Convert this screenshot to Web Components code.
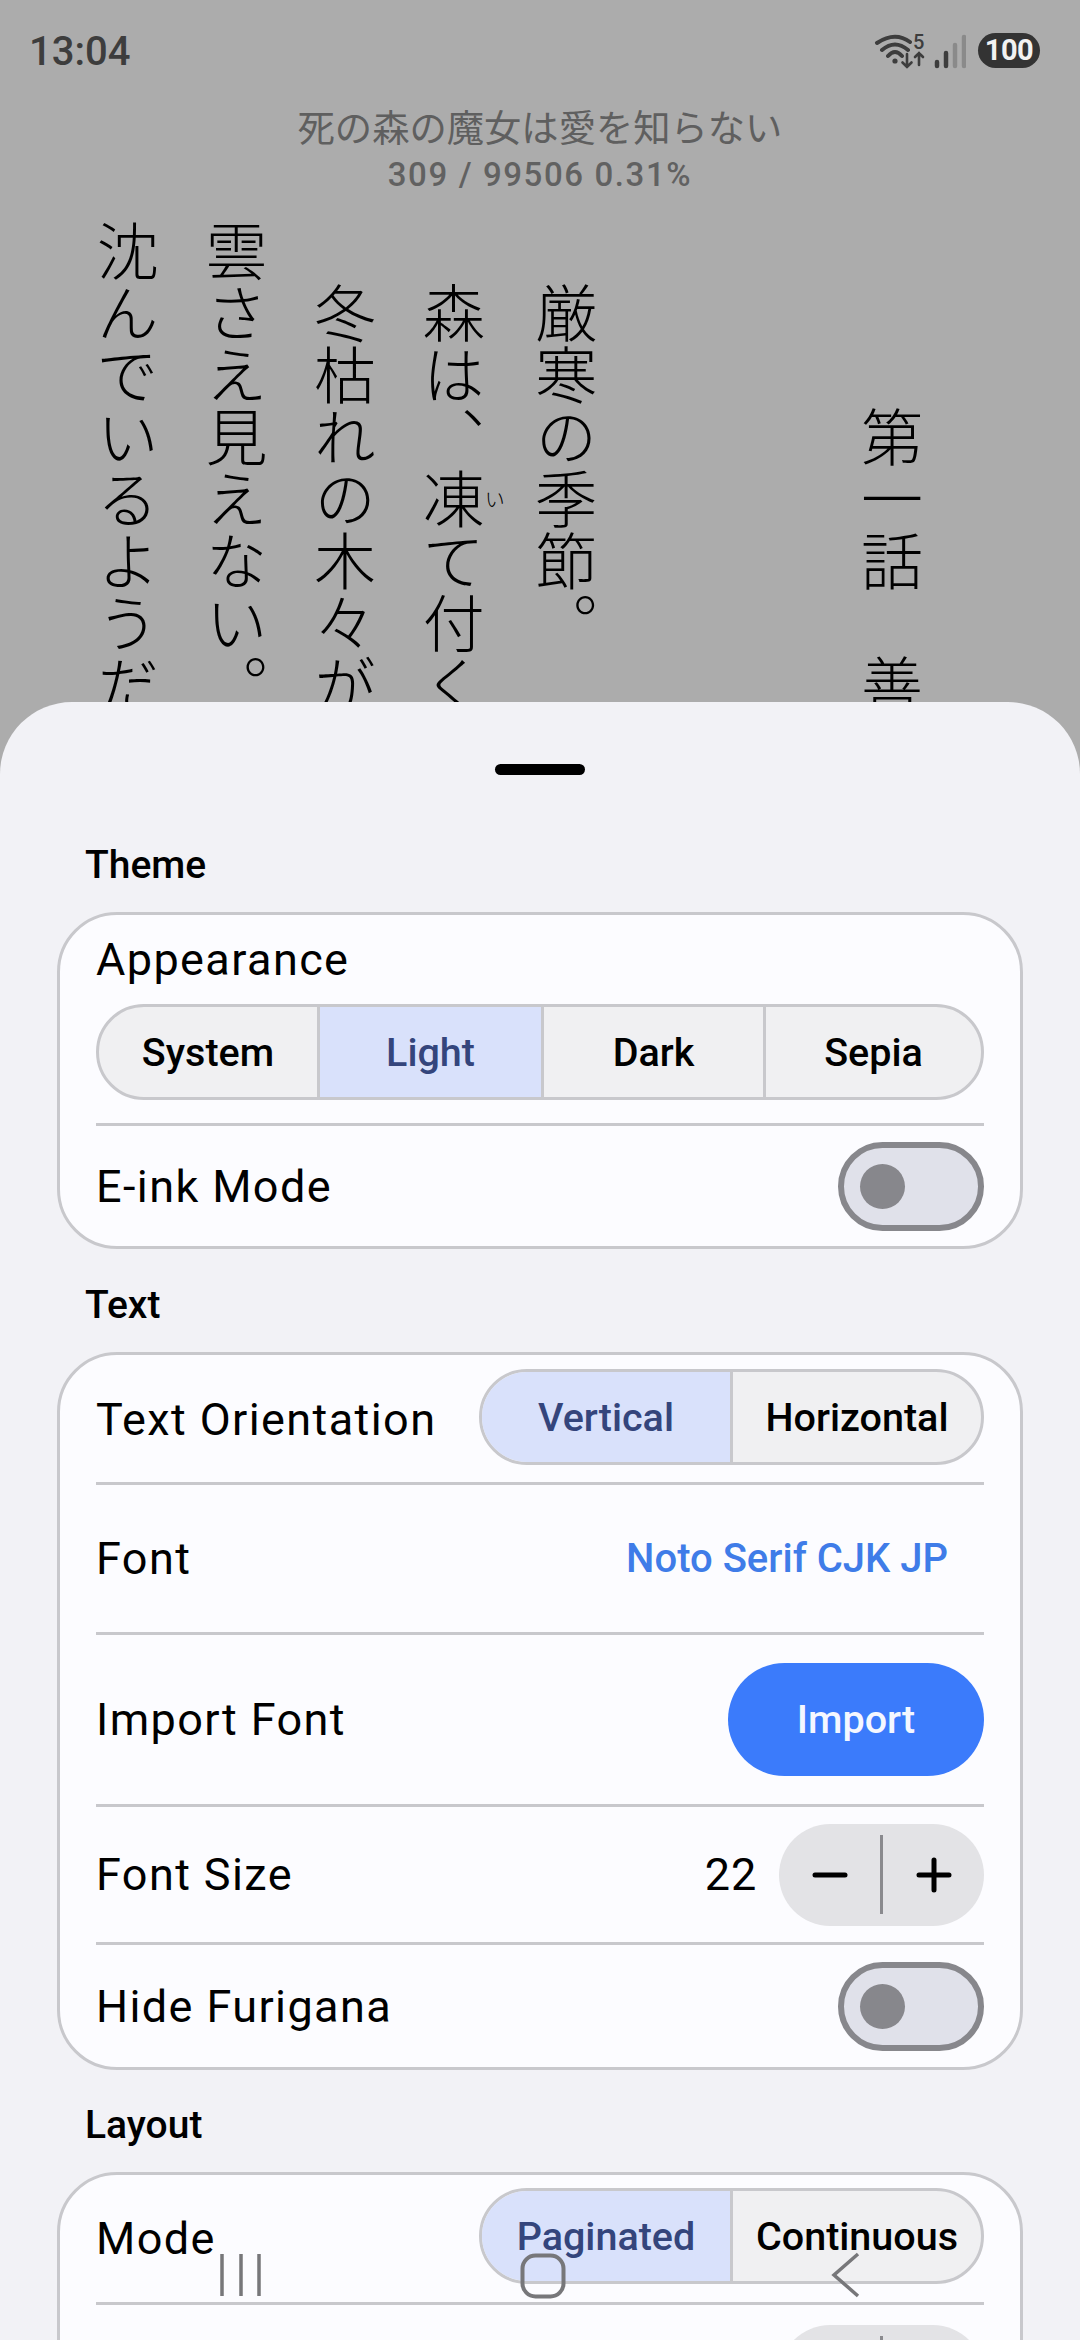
<!DOCTYPE html>
<html lang="ja"><head><meta charset="utf-8"><title>Reader settings</title>
<style>
html,body{margin:0;padding:0;width:1080px;height:2340px;overflow:hidden;background:#acacac}
body{font-family:Roboto,"Noto Sans CJK JP",sans-serif}
</style></head><body>
<reader-screen>
  <status-bar slot="top" time="13:04"></status-bar>
  <reader-page title-text="死の森の魔女は愛を知らない" progress="309 / 99506 0.31%"></reader-page>
  <settings-sheet slot="sheet">
    <section-label style="--h:137px">Theme</section-label>
    <settings-card>
      <stack-row label="Appearance">
        <seg-control><seg-item style="flex:0 0 218px">System</seg-item><seg-item style="flex:0 0 224px" selected>Light</seg-item><seg-item style="flex:0 0 222px">Dark</seg-item><seg-item>Sepia</seg-item></seg-control>
      </stack-row>
      <setting-row h="123" label="E-ink Mode" divider><toggle-switch></toggle-switch></setting-row>
    </settings-card>
    <section-label style="--h:103px">Text</section-label>
    <settings-card>
      <setting-row h="127" pad="14" label="Text Orientation"><seg-control style="width:505px"><seg-item selected>Vertical</seg-item><seg-item>Horizontal</seg-item></seg-control></setting-row>
      <setting-row h="150" label="Font" divider><span style="color:#3f7ce8;font-weight:500;font-size:40px;margin-right:36px">Noto Serif CJK JP</span></setting-row>
      <setting-row h="172" label="Import Font" divider><primary-button>Import</primary-button></setting-row>
      <setting-row h="138" label="Font Size" divider><stepper-control value="22"></stepper-control></setting-row>
      <setting-row h="125" label="Hide Furigana" divider><toggle-switch></toggle-switch></setting-row>
    </settings-card>
    <section-label style="--h:102px">Layout</section-label>
    <settings-card>
      <setting-row h="127" pad="13" label="Mode"><seg-control style="width:505px"><seg-item selected>Paginated</seg-item><seg-item>Continuous</seg-item></seg-control></setting-row>
      <setting-row h="144" label="" divider><stepper-control value=""></stepper-control></setting-row>
    </settings-card>
  </settings-sheet>
  <nav-bar slot="nav"></nav-bar>
</reader-screen>
<script>
function def(name,css,html,init){
  customElements.define(name,class extends HTMLElement{
    constructor(){super();this.attachShadow({mode:'open'})}
    connectedCallback(){
      const a=n=>this.getAttribute(n);
      this.shadowRoot.innerHTML='<style>'+css+'</style>'+(typeof html==='function'?html(a,this):html);
      if(init)init(this,a);
    }
  });
}
def('reader-screen',`:host{display:block;position:relative;width:1080px;height:2340px;overflow:hidden;background:#acacac}`,
 `<slot name="top"></slot><slot></slot><slot name="sheet"></slot><slot name="nav"></slot>`);
def('status-bar',`:host{display:flex;align-items:center;justify-content:space-between;height:100px;padding:0 40px 0 29px;color:#3d3d3d;font-family:Roboto,sans-serif}
 .t{font-size:40px;font-weight:500;letter-spacing:0;position:relative;top:1px}
 .r{display:flex;align-items:center;gap:12px}
 svg{display:block}
 .b{width:62px;height:35px;border-radius:18px;background:#333;color:#f2f2f2;font-size:29px;font-weight:700;display:flex;align-items:center;justify-content:center;letter-spacing:-.5px}`,
 a=>`<span class="t">${a('time')}</span><span class="r">
 <svg width="96" height="40" viewBox="870 30 96 40" fill="none" stroke="#3d3d3d" stroke-linecap="round">
  <path d="M877 43Q895 31 910 42M882 50Q895 39 908 50M888 56Q895 48 902 56" stroke-width="4"/>
  <circle cx="895" cy="61" r="2.6" fill="#3d3d3d" stroke="none"/>
  <path d="M907 54V67M902.500 62.500L907 67L911.500 62.500M919 65V53M915 57L919 53L923 57" stroke-width="2.600"/>
  <text x="913" y="49" font-family="Roboto,sans-serif" font-size="20" font-weight="500" fill="#3d3d3d" stroke="none">5</text>
  <g stroke-width="4.500"><path d="M937 62V66M946 53V66"/><path d="M955 45V66M964 37V66" stroke="#8a8a8a"/></g>
 </svg><span class="b">100</span></span>`);
def('reader-page',`:host{display:block;color:#000;font-family:"Noto Sans CJK JP",sans-serif}
 .h{color:#5f5f5f;text-align:center;height:120px}
 .a{font-size:37.300px;line-height:50px;padding-top:1px}
 .p{font-family:Roboto,sans-serif;font-size:33px;font-weight:500;line-height:47px;letter-spacing:1.600px;color:#616161}
 .v{writing-mode:vertical-rl;text-orientation:upright;font-size:62px;line-height:108.600px;font-weight:300;margin-left:73px;width:873px;height:600px;white-space:nowrap;font-family:"Noto Sans CJK JP",sans-serif;overflow:hidden}
 .v div{display:block;min-width:108.600px}
 .wide{margin-right:4px}
 rt{font-size:20px;line-height:20px}`,
 a=>`<div class="h"><div class="a">${a('title-text')}</div><div class="p">${a('progress')}</div></div>
 <div class="v"><div>　　　第一話　善</div><div></div><div></div><div>　厳寒の季節。</div><div class="wide">　森は、<ruby>凍<rt>い</rt></ruby>て付く</div><div>　冬枯れの木々が</div><div>雲さえ見えない。</div><div>沈んでいるようだ</div></div>`);
def('settings-sheet',`:host{display:block;position:absolute;left:0;right:0;top:702px;bottom:0;background:#f2f2f6;border-radius:72px 72px 0 0;overflow:hidden;padding:0 57px;box-sizing:border-box;font-family:Roboto,sans-serif}
 .g{width:90px;height:11px;border-radius:6px;background:#000;margin:62px auto 0}`,
 `<div class="g"></div><slot></slot>`);
def('section-label',`:host{display:flex;align-items:flex-end;height:var(--h,103px);padding-left:28px;box-sizing:border-box;font-size:39px;font-weight:500;color:#000}
 span{display:block;line-height:94px}`,`<span><slot></slot></span>`);
def('settings-card',`:host{display:block;box-sizing:border-box;border:3px solid #c8c8cc;border-radius:60px;background:#fcfcff;padding:0 36px}`,`<slot></slot>`);
const LBL=`font-size:45px;letter-spacing:1.400px;color:#000;`;
def('stack-row',`:host{display:block;height:208px;box-sizing:border-box}
 .l{${LBL}height:89px;display:flex;align-items:center;}`,a=>`<div class="l">${a('label')}</div><slot></slot>`);
def('setting-row',`:host{display:flex;align-items:center;justify-content:space-between;box-sizing:border-box;color:#000}
 .l{${LBL}}`,(a,el)=>{
   el.style.height=a('h')+'px';
   if(a('divider')!==null){el.style.borderTop='3px solid #c8c8cc';}
   if(a('pad')){el.style.alignItems='flex-start';el.style.paddingTop=a('pad')+'px';}
   return `<span class="l" style="${a('pad')?'align-self:center;margin-top:-13px':''}">${a('label')}</span><slot></slot>`;
 });
def('seg-control',`:host{display:flex;box-sizing:border-box;height:96px;border:3px solid #c8c8cc;border-radius:48px;overflow:hidden;background:#f0f0f2}`,`<slot></slot>`);
def('seg-item',`:host{flex:1 1 0;display:flex;align-items:center;justify-content:center;font-size:39.500px;font-weight:500;color:#000;box-sizing:border-box;white-space:nowrap}
 :host(:not(:first-child)){border-left:3px solid #c8c8cc}
 :host([selected]){background:#d9e1fb;color:#34457c}`,`<slot></slot>`);
def('toggle-switch',`:host{display:flex;align-items:center;box-sizing:border-box;width:146px;height:89px;border:6px solid #87878c;border-radius:45px;background:#e0e1ea;padding-left:16px}
 i{display:block;width:45px;height:45px;border-radius:50%;background:#87878c}`,`<i></i>`);
def('primary-button',`:host{display:flex;align-items:center;justify-content:center;width:256px;height:113px;border-radius:57px;background:#3b7bfb;color:#f4f7ff;font-size:39.500px;font-weight:500}`,`<slot></slot>`);
def('stepper-control',`:host{display:flex;align-items:center;gap:22px}
 .v{font-size:45px;color:#000;letter-spacing:.8px}
 .s{position:relative;width:205px;height:102px;border-radius:51px;background:#e3e3e6;display:flex;align-items:center}
 .s b{flex:1;display:flex;justify-content:center}
 .s u{width:3px;height:79px;background:#8a8a8e}
 svg{display:block}`,
 a=>`<span class="v">${a('value')||''}</span><div class="s"><b><svg width="36" height="36" viewBox="0 0 36 36"><path d="M3 18H33" stroke="#000" stroke-width="5" stroke-linecap="round"/></svg></b><u></u><b><svg width="36" height="36" viewBox="0 0 36 36"><path d="M3 18H33M18 3V33" stroke="#000" stroke-width="5" stroke-linecap="round"/></svg></b></div>`);
def('nav-bar',`:host{display:block;position:absolute;left:0;top:2250px;width:1080px;height:50px;pointer-events:none}
 svg{display:block}`,
 `<svg width="1080" height="50" viewBox="0 2250 1080 50" fill="none" stroke="#77777a"><path d="M222 2254V2296M241 2254V2296M259 2254V2296" stroke-width="3.500"/><rect x="522.500" y="2255.500" width="41" height="41" rx="13" stroke-width="4"/><path d="M858 2254L834 2275L858 2296" stroke-width="3.500"/></svg>`);
</script>
</body></html>
